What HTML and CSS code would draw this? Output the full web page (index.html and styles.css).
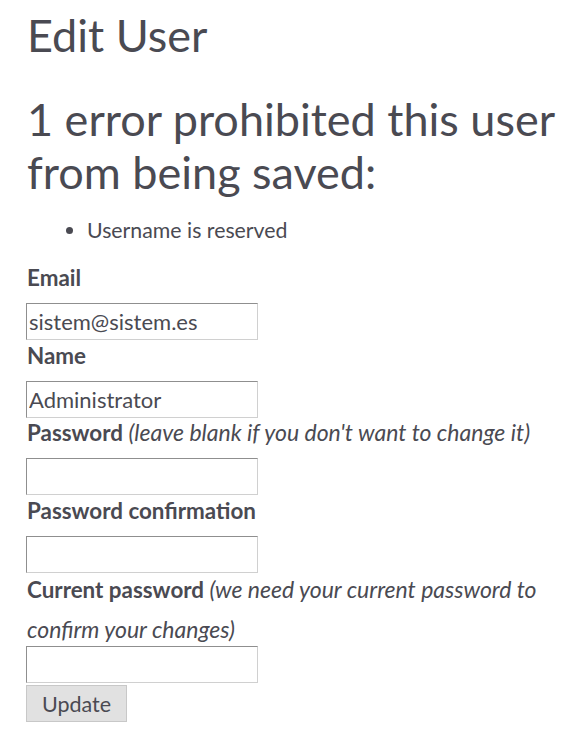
FILE: index.html
```html
<!DOCTYPE html>
<html lang="en">
<head>
<meta charset="utf-8">
<title>Edit User</title>
<link rel="stylesheet" href="styles.css">
</head>
<body>
<main class="page">
  <h1 class="title">Edit User</h1>
  <form class="user-form">
    <div class="errors">
      <h2 class="errors-title">1 error prohibited this user from being saved:</h2>
      <ul class="errors-list">
        <li>Username is reserved</li>
      </ul>
    </div>
    <div class="field field-first">
      <label class="label">Email</label>
      <input class="input" type="email" value="sistem@sistem.es">
    </div>
    <div class="field">
      <label class="label">Name</label>
      <input class="input" type="text" value="Administrator">
    </div>
    <div class="field">
      <label class="label">Password <i class="hint">(leave blank if you don't want to change it)</i></label>
      <input class="input" type="password">
    </div>
    <div class="field">
      <label class="label">Password confirmation</label>
      <input class="input" type="password">
    </div>
    <div class="field field-long">
      <label class="label">Current password <i class="hint">(we need your current password to confirm your changes)</i></label>
      <input class="input" type="password">
    </div>
    <div class="actions">
      <button class="button" type="submit">Update</button>
    </div>
  </form>
</main>
</body>
</html>
```

FILE: styles.css
```css
html, body {
  margin: 0;
  padding: 0;
  background: #ffffff;
}

body {
  font-family: Lato, "Open Sans", sans-serif;
  font-size: 21.3px;
  line-height: 38px;
  color: #4a4a52;
}

.page {
  padding: 8px 0 0 27px;
}

.title {
  margin: 0;
  font-size: 45px;
  font-weight: 400;
  line-height: 54px;
}

.user-form {
  margin: 0;
}

.errors-title {
  margin: 31px 0 0 0;
  font-size: 45px;
  font-weight: 400;
  line-height: 53px;
}

.errors-list {
  margin: 12px 0 10px 0;
  padding-left: 60px;
  line-height: 38px;
}

.field {
  display: flex;
  flex-direction: column;
  align-items: flex-start;
}

.label {
  font-size: 22.4px;
  font-weight: 700;
  line-height: 38px;
  margin-top: -3.5px;
}

.field-first .label {
  margin-top: 0;
}

.field-long .label {
  margin-top: -4px;
}

.hint {
  font-size: 23px;
  font-weight: 400;
  font-style: italic;
  line-height: 20px;
}

.field-long .hint {
  line-height: 40px;
}

.input {
  box-sizing: border-box;
  width: 232px;
  height: 37px;
  margin: 6px 0 0 -1px;
  padding: 1px 2px;
  font-family: Lato, "Open Sans", sans-serif;
  font-size: 22px;
  color: #4a4a52;
  background: #ffffff;
  border: 1px solid #a9a9a9;
  border-top-color: #8f8f8f;
  border-left-color: #8f8f8f;
  border-bottom-color: #d0d0d0;
  border-right-color: #d0d0d0;
  border-radius: 0;
}

.field-long .input {
  margin-top: -3px;
}

.actions {
  margin-top: 2px;
}

.button {
  box-sizing: border-box;
  width: 101px;
  height: 37px;
  margin-left: -1px;
  padding: 0;
  font-family: Lato, "Open Sans", sans-serif;
  font-size: 21.5px;
  color: #4a4a52;
  background: #e1e1e1;
  border: 1px solid #c8c8c8;
  border-radius: 0;
}
```
